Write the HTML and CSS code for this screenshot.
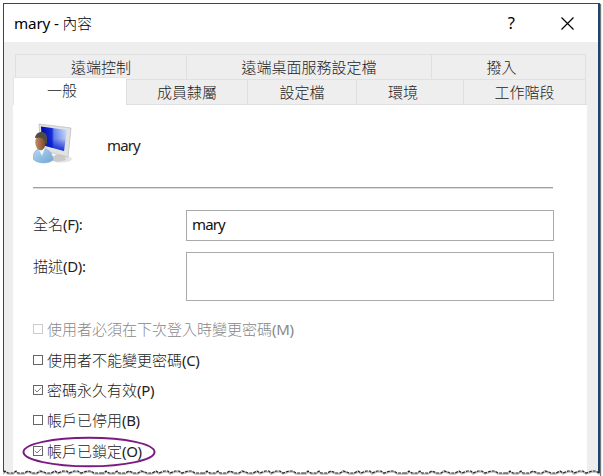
FILE: index.html
```html
<!DOCTYPE html>
<html lang="zh-Hant">
<head>
<meta charset="utf-8">
<title>mary - 內容</title>
<link rel="stylesheet" href="styles.css">
</head>
<body>
<main class="window">
  <header class="titlebar">
    <h1><span class="latin">mary - </span>內容</h1>
    <span class="help">?</span>
    <svg class="close" width="13" height="13" viewBox="0 0 13 13"><path d="M.5.5l12 12M12.5.5l-12 12"/></svg>
  </header>
  <div class="body">
    <nav class="tabs back"><span>遠端控制</span><span>遠端桌面服務設定檔</span><span class="dialin">撥入</span></nav>
    <nav class="tabs front"><span class="selected">一般</span><span>成員隸屬</span><span>設定檔</span><span class="environment">環境</span><span>工作階段</span></nav>
    <section class="panel">
      <div class="identity">
        <svg class="user" width="40" height="42" viewBox="0 0 40 42">
          <defs>
            <linearGradient id="screen"><stop offset="0" stop-color="#0009a8"/><stop offset=".42" stop-color="#1630d8"/><stop offset=".5" stop-color="#6a8cf0"/><stop offset="1" stop-color="#d5e3ff"/></linearGradient>
            <linearGradient id="shade" x2="0" y2="1"><stop offset="0" stop-color="#0010b0" stop-opacity="0"/><stop offset=".5" stop-color="#0010c0" stop-opacity=".1"/><stop offset="1" stop-color="#0018d0" stop-opacity=".9"/></linearGradient>
            <linearGradient id="shirt" x2="1" y2="1"><stop offset="0" stop-color="#b8daf3"/><stop offset="1" stop-color="#6fa5d4"/></linearGradient>
            <linearGradient id="face"><stop offset="0" stop-color="#c48d64"/><stop offset="1" stop-color="#764727"/></linearGradient>
          </defs>
          <ellipse cx="28" cy="36" rx="11" ry="3.5" fill="#e4e4e4"/>
          <path d="M22 32l9-1 2 6-8 2-8-2z" fill="#c9cac9"/>
          <path d="M6 1l32 4-3 29-27-7z" fill="#e0e3e1" stroke="#b5bab7" stroke-width=".7"/>
          <path d="M8 3.5l26 3.5-3 21-22-6z" fill="url(#screen)"/>
          <path d="M8 3.5l26 3.5-3 21-22-6z" fill="url(#shade)"/>
          <path d="M0 36c0-7 3-10 8-11 7 0 12 5 12 12-4 4-16 4-20-1z" fill="url(#shirt)" stroke="#7ea6c8" stroke-width=".5"/>
          <path d="M5 25l4 8 3-8z" fill="#e9f5fa"/>
          <ellipse cx="7.5" cy="19.5" rx="5.2" ry="7.8" fill="url(#face)"/>
          <path d="M2 15c1-8 12-8 12 0v7l-3-5c-2-3-6-2-9-2z" fill="#514b45"/>
        </svg>
        <span class="latin">mary</span>
      </div>
      <div class="rule"></div>
      <div class="field name"><label>全名<b>(F):</b></label><div class="input latin">mary</div></div>
      <div class="field description"><label>描述<b>(D):</b></label><div class="input"></div></div>
      <div class="options">
        <div class="option disabled"><i></i><span>使用者必須在下次登入時變更密碼<b>(M)</b></span></div>
        <div class="option"><i></i><span>使用者不能變更密碼<b>(C)</b></span></div>
        <div class="option"><i><svg viewBox="0 0 9 9"><path d="M1 4.3l2.4 2.4L8 2"/></svg></i><span>密碼永久有效<b>(P)</b></span></div>
        <div class="option"><i></i><span>帳戶已停用<b>(B)</b></span></div>
        <div class="option"><i><svg viewBox="0 0 9 9"><path d="M1 4.3l2.4 2.4L8 2"/></svg></i><span>帳戶已鎖定<b>(O)</b></span></div>
      </div>
    </section>
  </div>
</main>
<svg class="highlight" width="136" height="34" viewBox="0 0 136 34"><ellipse cx="68" cy="17" rx="65.5" ry="14.3"/></svg>
<svg class="torn" width="603" height="7" viewBox="0 0 603 7">
  <defs><pattern id="edge" width="101" height="7" patternUnits="userSpaceOnUse">
    <path class="paper" d="M0 3l3-1 2-1 3 2 5-1 3-1 2 2 6-1 4-1 5 2 4-1 3-1 4 1 2 1 5-1 4-1 3 2 5-2 4 0 2 2 5-2 4 0 3 2 6-2 4 0 3 2 7 0v4H0z"/>
    <path class="shadow" d="M0 4l3 0 2-2 3 2 5 0 3-2 2 2 6 0 4-2 5 2 4 0 3-2 4 1 2 1 5 0 4-2 3 2 5-2 4 0 2 2 5-2 4 0 3 2 6-2 4 0 3 2 7 0"/>
    <path class="edge" d="M0 3l3 0 2-2 3 2 5 0 3-2 2 2 6 0 4-2 5 2 4 0 3-2 4 1 2 1 5 0 4-2 3 2 5-2 4 0 2 2 5-2 4 0 3 2 6-2 4 0 3 2 7 0"/>
  </pattern></defs>
  <rect x="3" width="597" height="7" fill="url(#edge)"/>
</svg>
</body>
</html>
```
FILE: styles.css
```css
* { box-sizing: border-box; }
body { margin: 0; width: 603px; height: 476px; overflow: hidden; position: relative; background: #fff; font: 15px/20px "Noto Sans", "Noto Sans CJK TC", sans-serif; color: #222; }
b { font-weight: 400; letter-spacing: -.35px; }
.latin { letter-spacing: -.9px; }
.window { margin: 3px 0 0 3px; width: 597px; height: 473px; border: 1px solid #1d4f70; border-right: 2px solid #174674; border-bottom: 0; box-shadow: 1px 1px 1px #777; background: #eee; }
.titlebar { height: 38px; background: #fff; display: flex; align-items: center; padding: 0 24px 0 10px; color: #000; }
h1 { margin: 0; font-size: 14.7px; font-weight: 300; flex: 1; }
h1 .latin { font-size: 15.2px; font-weight: 400; letter-spacing: -.15px; }
.help { margin-right: 46px; font-size: 16.5px; }
.close { stroke: #000; stroke-width: 1.2; }
.body { padding: 12px 0 0 9px; }
.tabs { display: grid; width: 571px; margin-left: 2px; text-align: center; font-weight: 300; }
.tabs span { border: 1px solid #e0e0e0; border-width: 1px 0 0 1px; height: 25px; line-height: 25px; }
.tabs span:last-child { border-right-width: 1px; }
.back { grid-template-columns: 171px 245px 155px; }
.front { grid-template-columns: 113px 121px 109px 107px 123px; width: 573px; margin-left: 0; }
.tabs .dialin { padding-right: 14px; }
.tabs .environment { padding-right: 14px; }
.tabs .selected { background: #fff; height: 28px; margin-top: -2px; padding-right: 16px; position: relative; border-color: #e5e5e5; }
.panel { background: #fff; width: 574px; height: 372px; border-top: 1px solid #e0e0e0; margin-top: -1px; padding: 17px 0 0 20px; font-weight: 300; }
.identity { display: flex; align-items: center; height: 46px; gap: 34px; font-weight: 400; }
.user { margin-top: -2px; }
.rule { width: 520px; height: 2px; background: #a0a0a0; border-bottom: 1px solid #ddd; margin-top: 19px; }
.field { display: grid; grid-template-columns: 153px 368px; }
.field label { padding-top: 4px; }
.name { margin-top: 21px; }
.input { height: 31px; border: 1px solid #aaa; padding: 3px 5px; color: #111; font-weight: 400; }
.description { margin-top: 11px; }
.description .input { height: 49px; }
.options { margin-top: 13px; }
.option { height: 30.4px; display: flex; align-items: center; gap: 4px; white-space: nowrap; }
.option i { width: 10px; height: 10px; border: 1px solid #666; display: flex; }
.option svg { width: 8px; height: 8px; fill: none; stroke: #666; }
.disabled { color: #888; }
.disabled i { border-color: #ccc; }
.highlight { position: absolute; left: 21px; top: 435px; fill: none; stroke: #7b1b81; stroke-width: 2; }
.torn { position: absolute; left: 0; top: 470px; }
.paper { fill: #fff; }
.edge { fill: none; stroke: #222; stroke-width: 1.2; stroke-dasharray: 3 1; }
.shadow { fill: none; stroke: #bbb; stroke-width: 1.5; }
```
